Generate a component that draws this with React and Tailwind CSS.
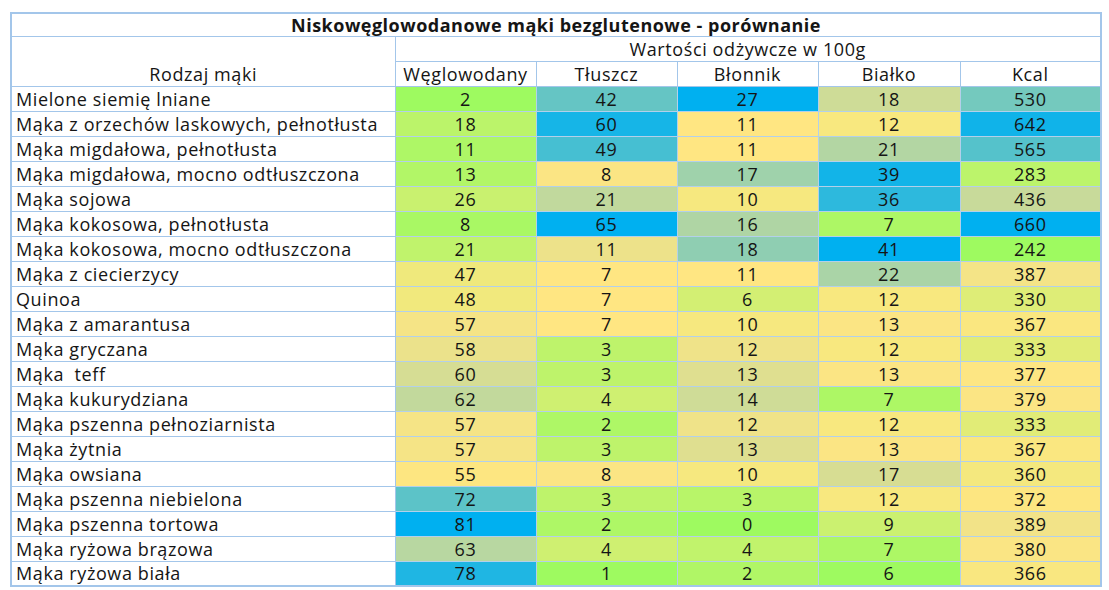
import React from "react";

const rows = [
  ["Mielone siemię lniane", 2, 42, 27, 18, 530],
  ["Mąka z orzechów laskowych, pełnotłusta", 18, 60, 11, 12, 642],
  ["Mąka migdałowa, pełnotłusta", 11, 49, 11, 21, 565],
  ["Mąka migdałowa, mocno odtłuszczona", 13, 8, 17, 39, 283],
  ["Mąka sojowa", 26, 21, 10, 36, 436],
  ["Mąka kokosowa, pełnotłusta", 8, 65, 16, 7, 660],
  ["Mąka kokosowa, mocno odtłuszczona", 21, 11, 18, 41, 242],
  ["Mąka z ciecierzycy", 47, 7, 11, 22, 387],
  ["Quinoa", 48, 7, 6, 12, 330],
  ["Mąka z amarantusa", 57, 7, 10, 13, 367],
  ["Mąka gryczana", 58, 3, 12, 12, 333],
  ["Mąka  teff", 60, 3, 13, 13, 377],
  ["Mąka kukurydziana", 62, 4, 14, 7, 379],
  ["Mąka pszenna pełnoziarnista", 57, 2, 12, 12, 333],
  ["Mąka żytnia", 57, 3, 13, 13, 367],
  ["Mąka owsiana", 55, 8, 10, 17, 360],
  ["Mąka pszenna niebielona", 72, 3, 3, 12, 372],
  ["Mąka pszenna tortowa", 81, 2, 0, 9, 389],
  ["Mąka ryżowa brązowa", 63, 4, 4, 7, 380],
  ["Mąka ryżowa biała", 78, 1, 2, 6, 366],
];

const headers = ["Węglowodany", "Tłuszcz", "Błonnik", "Białko", "Kcal"];

// 3-colour scale: min green, median yellow, max blue
const GREEN = [158, 250, 96];
const YELLOW = [255, 230, 130];
const BLUE = [0, 176, 240];

const mix = (a, b, t) => a.map((v, i) => Math.round(v + (b[i] - v) * t));

function scaleFor(col) {
  const vals = rows.map((r) => r[col]).sort((a, b) => a - b);
  const min = vals[0];
  const max = vals[vals.length - 1];
  const n = vals.length;
  const med = n % 2 ? vals[(n - 1) / 2] : (vals[n / 2 - 1] + vals[n / 2]) / 2;
  return (v) => {
    let c;
    if (v <= med) c = mix(GREEN, YELLOW, med === min ? 1 : (v - min) / (med - min));
    else c = mix(YELLOW, BLUE, (v - med) / (max - med));
    return `rgb(${c[0]}, ${c[1]}, ${c[2]})`;
  };
}

const scales = [1, 2, 3, 4, 5].map(scaleFor);

export default function App() {
  return (
    <div
      className="w-[1109px] h-[590px] bg-white pt-[12px] pl-[10px] text-[#151515]"
      style={{ fontFamily: '"Open Sans", "Liberation Sans", sans-serif' }}
    >
      <table className="border-collapse border-2 border-[#a3c6ea] table-fixed w-[1090px] text-[18px] tracking-[0.6px] leading-none">
        <colgroup>
          <col className="w-[384px]" />
          <col className="w-[141px]" />
          <col className="w-[141px]" />
          <col className="w-[141px]" />
          <col className="w-[142px]" />
          <col className="w-[141px]" />
        </colgroup>
        <thead>
          <tr className="h-[23px]">
            <th colSpan={6} className="border border-[#a3c6ea] font-bold tracking-[0.5px] text-center p-0">
              Niskowęglowodanowe mąki bezglutenowe - porównanie
            </th>
          </tr>
          <tr className="h-[25px]">
            <th rowSpan={2} className="border border-[#a3c6ea] font-normal text-center align-bottom pb-[3px]">
              Rodzaj mąki
            </th>
            <th colSpan={5} className="border border-[#a3c6ea] font-normal text-center p-0">
              Wartości odżywcze w 100g
            </th>
          </tr>
          <tr className="h-[25px]">
            {headers.map((h) => (
              <th key={h} className="border border-[#a3c6ea] font-normal text-center p-0">
                {h}
              </th>
            ))}
          </tr>
        </thead>
        <tbody>
          {rows.map((r) => (
            <tr key={r[0]} className="h-[25px]">
              <td className="border border-[#a3c6ea] pl-[4px] p-0 whitespace-pre">{r[0]}</td>
              {r.slice(1).map((v, i) => (
                <td
                  key={i}
                  className="border border-[#b3d0ea] text-center p-0"
                  style={{ backgroundColor: scales[i](v) }}
                >
                  {v}
                </td>
              ))}
            </tr>
          ))}
        </tbody>
      </table>
    </div>
  );
}
